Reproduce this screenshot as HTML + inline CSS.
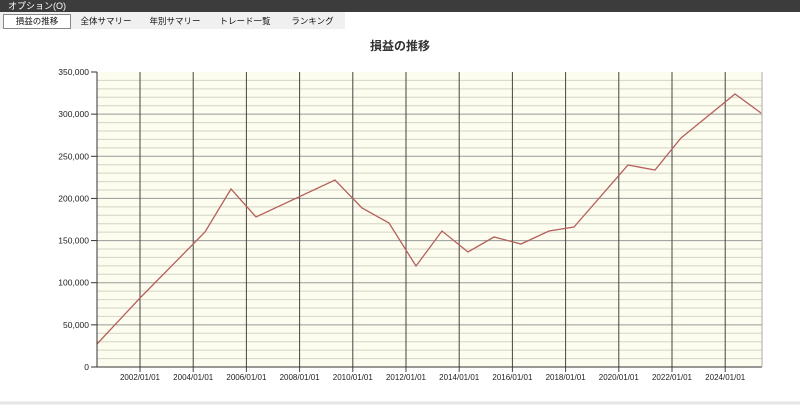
<!DOCTYPE html><html><head><meta charset="utf-8"><style>
body{margin:0;width:800px;height:405px;overflow:hidden;background:#fff;font-family:"Liberation Sans","Noto Sans CJK JP",sans-serif}
.top{height:12px;background:#3c3c3c;color:#fff;font-size:9px;line-height:12px;padding-left:8px}
.tabs{position:absolute;top:12px;left:0;width:345px;height:17px;background:#f0f0f0}
.tab{position:absolute;top:3px;height:13px;font-size:8.5px;line-height:13px;text-align:center;color:#111}
</style></head><body>
<div class="top">オプション(O)</div>
<div class="tabs">
<div class="tab" style="left:3px;width:66px;border:1px solid #888;background:#fff;top:2px">損益の推移</div>
<div class="tab" style="left:75px;width:62px">全体サマリー</div>
<div class="tab" style="left:140px;width:70px">年別サマリー</div>
<div class="tab" style="left:210px;width:70px">トレード一覧</div>
<div class="tab" style="left:280px;width:65px">ランキング</div>
</div>
<svg style="position:absolute;left:0;top:0" width="800" height="405">
<text x="400" y="50" font-size="12" font-weight="bold" text-anchor="middle" fill="#333" font-family="Liberation Sans,Noto Sans CJK JP,sans-serif">損益の推移</text>
<rect x="97" y="72" width="665" height="295" fill="#fdfdef"/>
<g id="g"></g>
<polyline fill="none" stroke="#b5605c" stroke-width="1.3" points="97,344 140,298 205,232 231,189 256,217 335,180 362,208 389,223 416,266 442,231 468,252 494,237 521,244 549,231 574,227 628,165 655,170 681,138 735,94 761,113"/>
<line x1="97" y1="72" x2="97" y2="367" stroke="#333"/>
<line x1="97" y1="367" x2="762" y2="367" stroke="#333"/>
<line x1="762" y1="72" x2="762" y2="367" stroke="#aaa"/>
<line x1="0" y1="403" x2="800" y2="403" stroke="#e5e5e5" stroke-width="3"/>
</svg>
<script>
var g=document.getElementById('g'),s='';
for(var i=1;i<35;i++){var y=367-i*295/35;s+='<line x1="97" x2="762" y1="'+y+'" y2="'+y+'" stroke="'+(i%5==0?'#999':'#d4d4c4')+'" stroke-width="1"/>';}
for(var i=0;i<=7;i++){var y=367-i*5*295/35;var v=i*50000;s+='<line x1="91" x2="97" y1="'+y+'" y2="'+y+'" stroke="#333"/><text x="89" y="'+(y+3)+'" font-size="8.5" text-anchor="end" fill="#222">'+(v?v.toLocaleString('en-US'):'0')+'</text>';}
var yrs=['2002','2004','2006','2008','2010','2012','2014','2016','2018','2020','2022','2024'];
for(var i=0;i<12;i++){var x=140+i*53.2;s+='<line x1="'+x+'" x2="'+x+'" y1="72" y2="372" stroke="#444"/><text x="'+x+'" y="380" font-size="8" text-anchor="middle" fill="#222">'+yrs[i]+'/01/01</text>';}
g.innerHTML=s;
</script>
</body></html>
